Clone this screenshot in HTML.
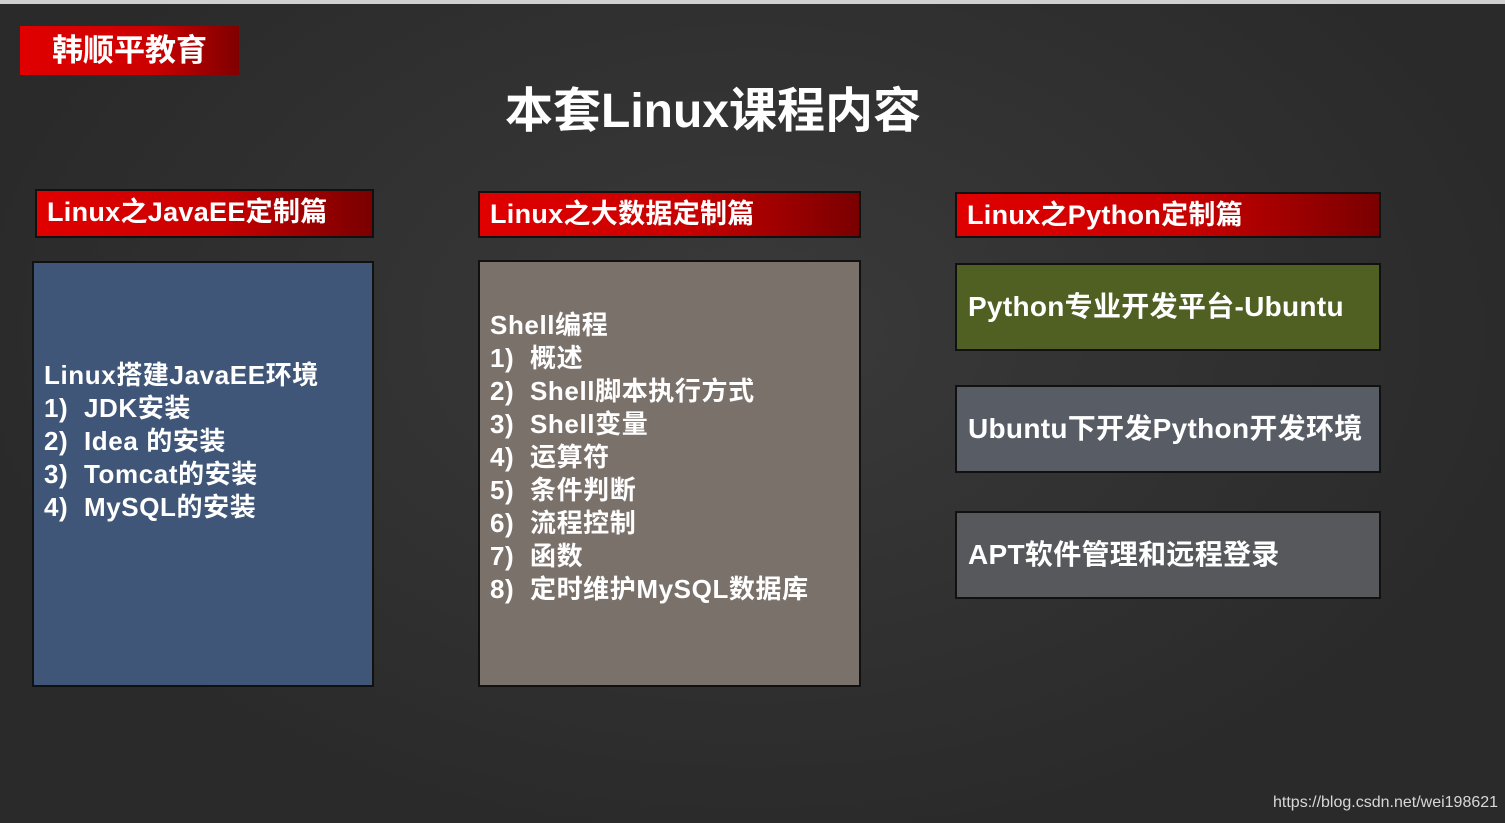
<!DOCTYPE html>
<html><head><meta charset="utf-8"><style>
body{margin:0;width:1505px;height:823px;overflow:hidden;background:#2f2f2f;font-family:"Liberation Sans","Noto Sans CJK SC",sans-serif;position:relative}
.top{position:absolute;left:0;top:0;width:1505px;height:4px;background:#d0d0d0}
.bg{position:absolute;left:0;top:4px;width:1505px;height:819px;background:radial-gradient(ellipse at 50% 40%,#3a3a3a,#2a2a2a 75%)}
.a{position:absolute;box-sizing:border-box;color:#fff;font-weight:bold}
.red{background:linear-gradient(90deg,#e00000 0%,#c80000 55%,#7a0000 100%);border:2px solid #111;font-size:27px;line-height:42px;padding-left:10px;white-space:nowrap;letter-spacing:0.3px}
.box{border:2px solid #111;font-size:26px;line-height:33px;white-space:nowrap;letter-spacing:0.6px}
.t{font-size:28px;letter-spacing:0.3px}
</style></head><body>
<div class="bg"></div><div class="top"></div>
<div class="a" style="left:20px;top:26px;width:219px;height:49px;background:linear-gradient(90deg,#e00000 0%,#cc0000 60%,#800000 100%);font-size:31px;line-height:49px;padding-left:32px">韩顺平教育</div>
<div class="a" style="left:0;width:1426px;top:82px;text-align:center;font-size:48px;line-height:60px">本套Linux课程内容</div>
<div class="a red" style="left:35px;top:189px;width:339px;height:49px">Linux之JavaEE定制篇</div>
<div class="a red" style="left:478px;top:191px;width:383px;height:47px">Linux之大数据定制篇</div>
<div class="a red" style="left:955px;top:192px;width:426px;height:46px">Linux之Python定制篇</div>
<div class="a box" style="left:32px;top:261px;width:342px;height:426px;background:#3f5678;padding:96px 0 0 10px">Linux搭建JavaEE环境<br>1)&nbsp; JDK安装<br>2)&nbsp; Idea 的安装<br>3)&nbsp; Tomcat的安装<br>4)&nbsp; MySQL的安装</div>
<div class="a box" style="left:478px;top:260px;width:383px;height:427px;background:#7b716b;padding:47px 0 0 10px">Shell编程<br>1)&nbsp; 概述<br>2)&nbsp; Shell脚本执行方式<br>3)&nbsp; Shell变量<br>4)&nbsp; 运算符<br>5)&nbsp; 条件判断<br>6)&nbsp; 流程控制<br>7)&nbsp; 函数<br>8)&nbsp; 定时维护MySQL数据库</div>
<div class="a box t" style="left:955px;top:263px;width:426px;height:88px;background:#505f22;line-height:84px;padding-left:11px">Python专业开发平台-Ubuntu</div>
<div class="a box t" style="left:955px;top:385px;width:426px;height:88px;background:#585c65;line-height:84px;padding-left:11px">Ubuntu下开发Python开发环境</div>
<div class="a box t" style="left:955px;top:511px;width:426px;height:88px;background:#57585b;line-height:84px;padding-left:11px">APT软件管理和远程登录</div>
<div style="position:absolute;left:1273px;top:794px;font-size:16px;color:#d8d8d8">https://blog.csdn.net/wei198621</div>
</body></html>
